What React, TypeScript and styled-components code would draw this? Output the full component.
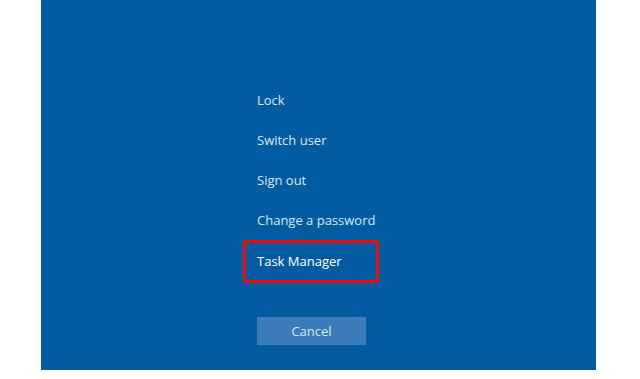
import React from "react";
import styled, { createGlobalStyle } from "styled-components";

const Global = createGlobalStyle`
  html, body { margin: 0; padding: 0; background: #ffffff; }
  body { font-family: "Open Sans", "Noto Sans", "Liberation Sans", sans-serif; }
`;

const Page = styled.div`
  width: 640px;
  height: 379px;
  background: #ffffff;
  display: flex;
  align-items: flex-start;
  padding-left: 41px;
  box-sizing: border-box;
`;

const Screen = styled.div`
  width: 555px;
  height: 370px;
  background: #035ca2;
  display: flex;
  flex-direction: column;
  padding: 80px 0 0 216px;
  box-sizing: border-box;
`;

const Menu = styled.div`
  display: flex;
  flex-direction: column;
  align-items: flex-start;
`;

const Item = styled.div<{ $highlighted?: boolean }>`
  height: ${(p) => (p.$highlighted ? "43px" : "40px")};
  display: flex;
  align-items: center;
  font-size: 13px;
  color: ${(p) => (p.$highlighted ? "#ffffff" : "#d9e5f2")};
  box-sizing: border-box;
  cursor: default;
  ${(p) =>
    p.$highlighted
      ? `
    margin-left: -14px;
    width: 136px;
    padding-left: 11px;
    padding-bottom: 1px;
    border: 3px solid #f20a0a;
    border-radius: 3px;
  `
      : ""}
`;

const CancelButton = styled.button`
  margin-top: 34px;
  width: 109px;
  height: 28px;
  border: none;
  background: #3a7dba;
  color: #dce8f3;
  font-family: inherit;
  font-size: 13px;
  padding: 0;
  cursor: default;
`;

const items = ["Lock", "Switch user", "Sign out", "Change a password"];

export default function App() {
  return (
    <>
      <Global />
      <Page>
        <Screen>
          <Menu>
            {items.map((t) => (
              <Item key={t}>{t}</Item>
            ))}
            <Item $highlighted>Task Manager</Item>
          </Menu>
          <CancelButton>Cancel</CancelButton>
        </Screen>
      </Page>
    </>
  );
}
